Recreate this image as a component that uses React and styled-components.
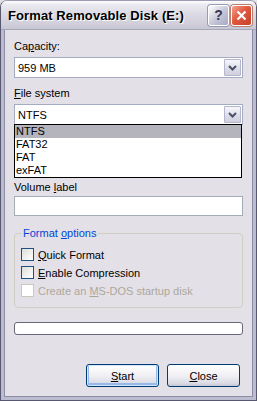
import styled, { createGlobalStyle } from "styled-components";

const GlobalStyle = createGlobalStyle`
  html, body {
    margin: 0;
    padding: 0;
    background: #e4e0e8;
  }
  * {
    box-sizing: border-box;
  }
`;

const Window = styled.div`
  width: 257px;
  height: 401px;
  display: flex;
  flex-direction: column;
  background: #e4e0e8;
  border: 1px solid #585870;
  border-top-color: #9c9cb4;
  border-radius: 7px 7px 0 0;
  overflow: hidden;
  font-family: "Liberation Sans", Arial, sans-serif;
  font-size: 11px;
  color: #000;
`;

const TitleBar = styled.div`
  height: 29px;
  flex: none;
  display: flex;
  align-items: center;
  padding: 0 4px 0 7px;
  background: linear-gradient(
    to bottom,
    #ffffff 0%,
    #ecebf1 12%,
    #dcdbe5 45%,
    #d2d1dc 75%,
    #c8c7d4 100%
  );
  border-bottom: 1px solid #a7a6b9;
`;

const Title = styled.div`
  flex: 1;
  font-weight: bold;
  font-size: 13px;
  color: #000;
  text-shadow: 1px 1px 0 #ffffff;
  letter-spacing: 0.1px;
`;

const CaptionButton = styled.div`
  width: 21px;
  height: 21px;
  margin-left: 2px;
  border: 1px solid #ffffff;
  border-radius: 3px;
  display: grid;
  place-items: center;
  background: ${({ $close }) =>
    $close
      ? "linear-gradient(135deg, #f3a38f 0%, #e1583f 45%, #c5402c 100%)"
      : "linear-gradient(135deg, #ffffff 0%, #c9c9dc 50%, #a8a8c2 100%)"};
  box-shadow: 0 0 0 1px ${({ $close }) => ($close ? "#b7826f" : "#9a9ab0")};
  color: ${({ $close }) => ($close ? "#fff" : "#39394f")};
  font-weight: bold;
  font-size: 14px;
`;

const Frame = styled.div`
  flex: 1;
  display: flex;
  border-left: 3px solid #bcbcd0;
  border-right: 3px solid #bcbcd0;
  border-bottom: 3px solid #bcbcd0;
`;

const Body = styled.div`
  flex: 1;
  display: flex;
  flex-direction: column;
  padding: 10px 9px 0 9px;
  background: #e4e0e8;
  border: 1px solid #8c8ca4;
  border-top: none;
`;

const Label = styled.div`
  height: 13px;
  line-height: 13px;
  margin-top: ${({ $top }) => $top || 0}px;
  margin-bottom: ${({ $bottom }) => $bottom || 0}px;
`;

const Combo = styled.div`
  height: 21px;
  flex: none;
  display: flex;
  align-items: center;
  background: #fff;
  border: 1px solid #a5acc2;
  padding: 1px;
`;

const ComboText = styled.div`
  flex: 1;
  padding-left: 2px;
`;

const ComboArrow = styled.div`
  width: 17px;
  height: 17px;
  border: 1px solid #b4b6cc;
  border-radius: 1px;
  display: grid;
  place-items: center;
  background: linear-gradient(to bottom, #f6f6fa 0%, #dcdce8 60%, #cfcfde 100%);
`;

const ListBox = styled.div`
  flex: none;
  border: 1px solid #000;
  background: #fff;
  display: flex;
  flex-direction: column;
  margin: -1px 1px 0 0;
`;

const ListItem = styled.div`
  height: 13px;
  line-height: 13px;
  padding-left: 1px;
  background: ${({ $active }) => ($active ? "#b4b4bc" : "transparent")};
`;

const TextInput = styled.div`
  height: 20px;
  flex: none;
  background: #fff;
  border: 1px solid #a5acb5;
`;

const GroupBox = styled.fieldset`
  margin: 11px 0 0 0;
  padding: 8px 0 10px 6px;
  border: 1px solid #cfcfc2;
  border-radius: 4px;
  display: flex;
  flex-direction: column;
  gap: 5px;
  min-width: 0;
`;

const Legend = styled.legend`
  color: #0046d5;
  padding: 0 2px;
  margin-left: 0;
  font-size: 11px;
  line-height: 13px;
`;

const CheckRow = styled.div`
  display: flex;
  align-items: center;
  gap: 4px;
  height: 13px;
  color: ${({ $disabled }) => ($disabled ? "#aca899" : "#000")};
`;

const Box = styled.div`
  width: 13px;
  height: 13px;
  border: 1px solid ${({ $disabled }) => ($disabled ? "#cac8bb" : "#1c5180")};
  background: ${({ $disabled }) =>
    $disabled
      ? "#fff"
      : "linear-gradient(135deg, #dcdcd7 0%, #f2f2f0 60%, #ffffff 100%)"};
`;

const Progress = styled.div`
  height: 13px;
  flex: none;
  margin-top: 14px;
  background: #fff;
  border: 1px solid #686878;
  border-radius: 3px;
`;

const ButtonRow = styled.div`
  display: flex;
  justify-content: flex-end;
  gap: 8px;
  margin-top: auto;
  padding: 0 3px 9px 0;
`;

const Button = styled.div`
  width: 73px;
  height: 23px;
  display: grid;
  place-items: center;
  border: 1px solid #003c74;
  border-radius: 3px;
  background: linear-gradient(to bottom, #ffffff 0%, #f0f0f4 50%, #dcdce6 85%, #c8c8d4 100%);
  box-shadow: ${({ $default }) =>
    $default ? "inset 0 0 0 1px #cee7ff, inset 0 -1px 0 2px #98b8ea" : "none"};
`;

const Underline = styled.span`
  text-decoration: underline;
`;

function Chevron() {
  return (
    <svg width="9" height="6" viewBox="0 0 9 6">
      <path d="M1 1 L4.5 4.5 L8 1" fill="none" stroke="#4d4d6b" strokeWidth="2" />
    </svg>
  );
}

function CloseX() {
  return (
    <svg width="11" height="11" viewBox="0 0 11 11">
      <path d="M1.5 1.5 L9.5 9.5 M9.5 1.5 L1.5 9.5" stroke="#fff" strokeWidth="2.2" />
    </svg>
  );
}

const fileSystems = ["NTFS", "FAT32", "FAT", "exFAT"];

function App() {
  return (
    <>
      <GlobalStyle />
      <Window>
        <TitleBar>
          <Title>Format Removable Disk (E:)</Title>
          <CaptionButton>?</CaptionButton>
          <CaptionButton $close>
            <CloseX />
          </CaptionButton>
        </TitleBar>
        <Frame>
          <Body>
            <Label $bottom={4}>
              Ca<Underline>p</Underline>acity:
            </Label>
            <Combo>
              <ComboText>959 MB</ComboText>
              <ComboArrow>
                <Chevron />
              </ComboArrow>
            </Combo>
            <Label $top={9} $bottom={4}>
              <Underline>F</Underline>ile system
            </Label>
            <Combo>
              <ComboText>NTFS</ComboText>
              <ComboArrow>
                <Chevron />
              </ComboArrow>
            </Combo>
            <ListBox>
              {fileSystems.map((fs, i) => (
                <ListItem key={fs} $active={i === 0}>
                  {fs}
                </ListItem>
              ))}
            </ListBox>
            <Label $top={3} $bottom={2}>
              Volume <Underline>l</Underline>abel
            </Label>
            <TextInput />
            <GroupBox>
              <Legend>
                Format <Underline>o</Underline>ptions
              </Legend>
              <CheckRow>
                <Box />
                <span>
                  <Underline>Q</Underline>uick Format
                </span>
              </CheckRow>
              <CheckRow>
                <Box />
                <span>
                  <Underline>E</Underline>nable Compression
                </span>
              </CheckRow>
              <CheckRow $disabled>
                <Box $disabled />
                <span>
                  Create an <Underline>M</Underline>S-DOS startup disk
                </span>
              </CheckRow>
            </GroupBox>
            <Progress />
            <ButtonRow>
              <Button $default>
                <span>
                  <Underline>S</Underline>tart
                </span>
              </Button>
              <Button>
                <span>
                  <Underline>C</Underline>lose
                </span>
              </Button>
            </ButtonRow>
          </Body>
        </Frame>
      </Window>
    </>
  );
}

export default App;
